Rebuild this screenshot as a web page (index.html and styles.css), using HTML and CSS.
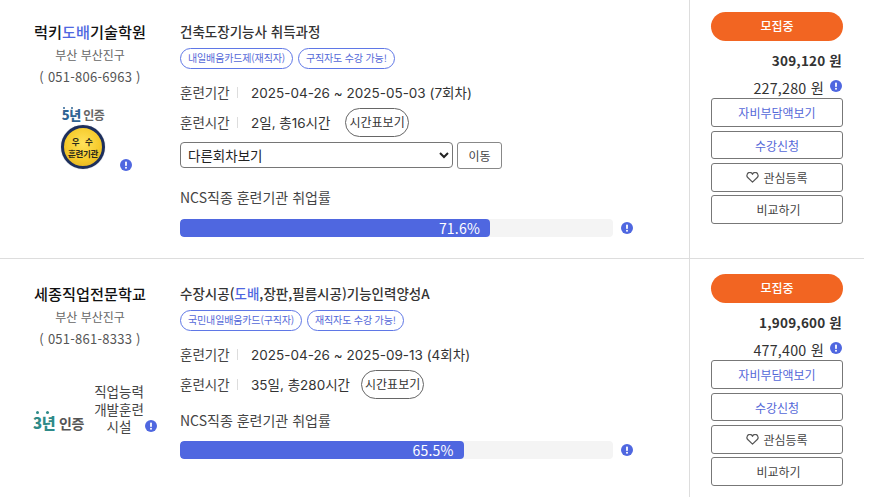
FILE: index.html
```html
<!DOCTYPE html>
<html lang="ko">
<head>
<meta charset="utf-8">
<title>훈련과정 목록</title>
<link rel="stylesheet" href="styles.css">
</head>
<body>
<svg class="defs" width="0" height="0" aria-hidden="true">
  <symbol id="info" viewBox="0 0 12 12">
    <circle cx="6" cy="6" r="6" fill="#4f67e0"/>
    <rect x="5.1" y="2.6" width="1.8" height="4.4" rx=".7" fill="#fff"/>
    <circle cx="6" cy="8.7" r="1" fill="#fff"/>
  </symbol>
</svg>
<main class="list">
  <article class="row">
    <section class="org">
      <h2 class="org-name">럭키<em>도배</em>기술학원</h2>
      <p class="org-line org-area">부산 부산진구</p>
      <p class="org-line">( 051-806-6963 )</p>
      <div class="cert cert-five">
        <div class="five">
          <div class="five-label"><i class="dots dots-five"></i><b>5년</b> 인증</div>
          <div class="medal"><span class="medal-top">우 수</span><span>훈련기관</span></div>
        </div>
        <svg class="info info-medal"><use href="#info"/></svg>
      </div>
    </section>
    <section class="course">
      <h3 class="title">건축도장기능사 취득과정</h3>
      <div class="tags"><span class="tag">내일배움카드제(재직자)</span><span class="tag">구직자도 수강 가능!</span></div>
      <div class="meta meta-first"><span class="meta-key">훈련기간</span><span class="meta-val">2025-04-26 ~ 2025-05-03 (7회차)</span></div>
      <div class="meta"><span class="meta-key">훈련시간</span><span class="meta-val">2일, 총16시간</span><span class="timetable timetable-wide">시간표보기</span></div>
      <div class="rounds">
        <select class="round-select"><option>다른회차보기</option></select>
        <button class="go" type="button">이동</button>
      </div>
      <div class="rate-label rate-label-a">NCS직종 훈련기관 취업률</div>
      <div class="rate">
        <div class="track"><div class="fill" style="width:71.6%">71.6%</div></div>
        <svg class="info"><use href="#info"/></svg>
      </div>
    </section>
    <aside class="side">
      <div class="status">모집중</div>
      <div class="price price-total">309,120 원</div>
      <div class="price price-self">227,280 원<svg class="info info-price"><use href="#info"/></svg></div>
      <div class="actions">
        <a class="act act-blue">자비부담액보기</a>
        <a class="act act-blue act-short">수강신청</a>
        <a class="act"><svg class="heart" viewBox="0 0 14 12"><path d="M7 11 1.8 6A3 3 0 0 1 1.2 2.6 3 3 0 0 1 7 2.7a3 3 0 0 1 5.8-.1A3 3 0 0 1 12.2 6Z" fill="none" stroke="#555" stroke-width="1.3" stroke-linejoin="round"/></svg>관심등록</a>
        <a class="act act-compare">비교하기</a>
      </div>
    </aside>
  </article>
  <article class="row">
    <section class="org">
      <h2 class="org-name">세종직업전문학교</h2>
      <p class="org-line org-area">부산 부산진구</p>
      <p class="org-line">( 051-861-8333 )</p>
      <div class="cert cert-three">
        <div class="three"><i class="dots"></i><b>3년</b> 인증</div>
        <div class="facility">직업능력<br>개발훈련<br>시설</div>
        <svg class="info"><use href="#info"/></svg>
      </div>
    </section>
    <section class="course">
      <h3 class="title">수장시공(<em>도배</em>,장판,필름시공)기능인력양성A</h3>
      <div class="tags"><span class="tag">국민내일배움카드(구직자)</span><span class="tag">재직자도 수강 가능!</span></div>
      <div class="meta meta-first"><span class="meta-key">훈련기간</span><span class="meta-val">2025-04-26 ~ 2025-09-13 (4회차)</span></div>
      <div class="meta"><span class="meta-key">훈련시간</span><span class="meta-val">35일, 총280시간</span><span class="timetable">시간표보기</span></div>
      <div class="rate-label rate-label-b">NCS직종 훈련기관 취업률</div>
      <div class="rate">
        <div class="track"><div class="fill" style="width:65.5%">65.5%</div></div>
        <svg class="info"><use href="#info"/></svg>
      </div>
    </section>
    <aside class="side">
      <div class="status">모집중</div>
      <div class="price price-total">1,909,600 원</div>
      <div class="price price-self">477,400 원<svg class="info info-price"><use href="#info"/></svg></div>
      <div class="actions">
        <a class="act act-blue">자비부담액보기</a>
        <a class="act act-blue act-short">수강신청</a>
        <a class="act"><svg class="heart" viewBox="0 0 14 12"><path d="M7 11 1.8 6A3 3 0 0 1 1.2 2.6 3 3 0 0 1 7 2.7a3 3 0 0 1 5.8-.1A3 3 0 0 1 12.2 6Z" fill="none" stroke="#555" stroke-width="1.3" stroke-linejoin="round"/></svg>관심등록</a>
        <a class="act act-compare">비교하기</a>
      </div>
    </aside>
  </article>
</main>
</body>
</html>
```
FILE: styles.css
```css
* { box-sizing: border-box; }
html, body { margin: 0; height: 497px; overflow: hidden; background: #fff; }
body { font-family: "Noto Sans CJK KR", "Noto Sans", sans-serif; color: #333; font-size: 14px; }
.defs { position: absolute; }
.list { width: 864px; margin-top: -3px; }
.row { display: grid; grid-template-columns: 180px 509px 175px; height: 262px; border-bottom: 1px solid #ddd; }
em { font-style: normal; color: #4f67e0; }
.info { width: 12px; height: 12px; flex: none; display: block; }

.org { padding-top: 22px; text-align: center; position: relative; }
.org-name { margin: 0; font-size: 15.2px; font-weight: 500; line-height: 24px; color: #111; width: 180px; }
.org-line { margin: 0; font-size: 13px; line-height: 20px; color: #666; width: 180px; }
.org-area { margin-top: 2px; font-size: 12px; }
.org-line + .org-line { margin-top: 2px; color: #555; letter-spacing: .25px; }
.cert { display: flex; }
.cert-five { margin-top: 21px; padding-left: 61px; }
.five { width: 44px; text-align: center; }
.five-label { font-size: 12px; line-height: 14px; font-weight: 700; color: #666; white-space: nowrap; letter-spacing: -.6px; margin-left: -2px; margin-right: -2px; position: relative; }
.five-label b { color: #2f6494; font-size: 13px; }
.medal { width: 44px; height: 44px; margin-top: 3px; border-radius: 50%; border: 3px solid #1d2f5c; box-shadow: 0 0 1px #8b93a8; background: radial-gradient(circle at 50% 40%, #ffe25a 0, #f6cb2c 55%, #dba81e 100%); display: flex; flex-direction: column; align-items: center; justify-content: center; font-size: 8.5px; line-height: 12px; font-weight: 700; color: #2b2a1a; white-space: nowrap; letter-spacing: -.3px; }
.medal-top { letter-spacing: 1.5px; }
.info-medal { align-self: flex-end; margin: 0 0 -2px 15px; }
.cert-three { margin-top: 34px; padding-left: 33px; align-items: flex-end; }
.three { width: 50px; font-size: 14px; font-weight: 700; color: #555; line-height: 20px; white-space: nowrap; position: relative; letter-spacing: -.3px; margin-bottom: 3px; }
.three b { color: #2e8a88; font-size: 15px; }
.dots { position: absolute; left: 3px; top: -2px; width: 3px; height: 3px; border-radius: 50%; background: #2e8a88; box-shadow: 10px 0 #2e8a88; }
.dots-five { left: 4px; top: -1px; width: 2px; height: 2px; background: #2f6494; box-shadow: 8px 0 #2f6494; }
.facility { width: 64px; margin-left: 4px; font-size: 13.5px; line-height: 17.5px; text-align: center; color: #444; }
.cert-three .info { margin: 0 0 4px -6px; }

.course { padding-top: 22px; }
.title { margin: 0; font-size: 13.5px; font-weight: 500; line-height: 24px; color: #333; }
.tags { display: flex; gap: 5px; margin-top: 5px; }
.tag { height: 21px; padding: 0 7px; border: 1px solid #5f77e6; border-radius: 11px; font-size: 10px; line-height: 18px; color: #5468d8; white-space: nowrap; letter-spacing: -.15px; }
.meta { display: flex; align-items: center; height: 30px; }
.meta-first { margin-top: 8px; }
.meta-key { width: 58px; font-size: 13.5px; color: #444; position: relative; }
.meta-key::after { content: ""; position: absolute; right: 0; top: 5px; bottom: 4px; width: 1px; background: #ddd; }
.meta-val { margin-left: 13px; font-family: Inter, "Noto Sans CJK KR", sans-serif; font-size: 13.5px; color: #333; white-space: nowrap; }
.timetable { margin-left: 11px; height: 29px; padding: 0 3px; border: 1px solid #666; border-radius: 15px; font-size: 12px; line-height: 26px; color: #333; white-space: nowrap; }
.timetable-wide { margin-left: 15px; }
.rounds { display: flex; gap: 4px; margin-top: 5px; align-items: flex-start; }
.round-select { width: 273px; height: 26px; font-family: inherit; font-size: 13.5px; padding-left: 3px; color: #222; background: #fff; border: 1px solid #767676; border-radius: 4px; }
.go { width: 45px; height: 27px; font-family: inherit; font-size: 12px; padding: 0; background: #fff; color: #444; border: 1px solid #888; border-radius: 3px; }
.rate-label { font-size: 14px; line-height: 20px; color: #444; }
.rate-label-a { margin-top: 18px; }
.rate-label-b { margin-top: 11px; }
.rate { display: flex; align-items: center; gap: 8px; margin-top: 11px; }
.rate-label-a + .rate { margin-top: 12px; }
.track { width: 433px; height: 18px; border-radius: 4px; background: #f4f4f4; overflow: hidden; }
.fill { height: 18px; border-radius: 4px; background: #4f67e0; color: #fff; text-align: right; padding-right: 10px; font-size: 14px; line-height: 18px; letter-spacing: .2px; }

.side { border-left: 1px solid #ddd; padding: 15px 21px 0; position: relative; }
.status { height: 29px; border-radius: 15px; background: #f26522; color: #fff; text-align: center; font-size: 12px; font-weight: 500; line-height: 27px; }
.price { text-align: right; white-space: nowrap; letter-spacing: .2px; padding-right: 1px; }
.price-total { margin-top: 8px; font-size: 13.5px; font-weight: 700; line-height: 22px; color: #333; }
.price-self { margin-top: 6px; margin-bottom: -1px; font-size: 14.3px; line-height: 22px; color: #333; display: flex; justify-content: flex-end; align-items: center; gap: 6px; }
.info-price { margin-top: -5px; }
.actions { display: flex; flex-direction: column; gap: 3px; }
.act { display: flex; align-items: center; justify-content: center; gap: 4px; height: 29px; border: 1px solid #777; border-radius: 3px; font-size: 12px; color: #444; background: #fff; }
.act-blue { color: #5468d8; margin-bottom: 1px; }
.act-short { height: 28px; }
.act-compare { padding-left: 3px; }
.heart { width: 13px; height: 11px; }
```
